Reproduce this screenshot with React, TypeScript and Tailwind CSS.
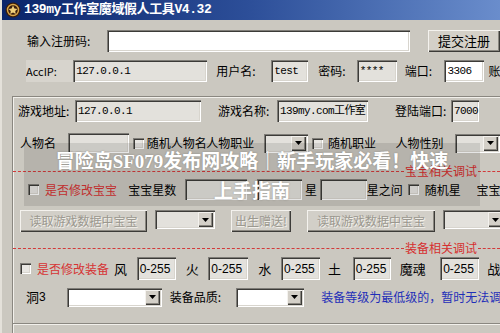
import React from "react";

const cjk = "font-['Noto_Sans_CJK_SC',sans-serif]";
const mono = "font-['Liberation_Mono','Noto_Sans_CJK_SC',monospace]";

const sunken =
  "shadow-[inset_1px_1px_0_#7f7d78,inset_2px_2px_0_#3c3b38,inset_-1px_-1px_0_#ffffff,inset_-2px_-2px_0_#d8d5ce]";
const raised =
  "shadow-[inset_1px_1px_0_#f4f2ee,inset_-1px_-1px_0_#3c3b38,inset_-2px_-2px_0_#8a8780]";

function Label({
  w,
  pl = 0,
  children,
  className = "",
}: {
  w?: number;
  pl?: number;
  children: React.ReactNode;
  className?: string;
}) {
  return (
    <div
      className={`h-full flex items-center whitespace-nowrap overflow-hidden text-[12px] text-black ${cjk} ${className}`}
      style={{ width: w, paddingLeft: pl }}
    >
      {children}
    </div>
  );
}

function Edit({
  w,
  value = "",
  white = false,
  className = "",
}: {
  w: number;
  value?: string;
  white?: boolean;
  className?: string;
}) {
  return (
    <div
      className={`h-full shrink-0 flex items-center pl-[3px] overflow-hidden whitespace-nowrap text-[11px] tracking-[-0.6px] text-black ${mono} ${sunken} ${
        white ? "bg-white" : "bg-[#e3e1dc]"
      } ${className}`}
      style={{ width: w }}
    >
      {value}
    </div>
  );
}

function Select({ w, white = false }: { w: number; white?: boolean }) {
  return (
    <div
      className={`h-[19px] shrink-0 flex justify-end items-stretch p-[2px] ${sunken} ${
        white ? "bg-white" : "bg-[#e3e1dc]"
      }`}
      style={{ width: w }}
    >
      <div className={`w-[15px] bg-[#d4d0c8] flex items-center justify-center ${raised}`}>
        <svg width="7" height="4" viewBox="0 0 7 4">
          <path d="M0 0h7L3.5 4z" fill="#000" />
        </svg>
      </div>
    </div>
  );
}

function Check({ ml = 0 }: { ml?: number }) {
  return (
    <div
      className={`w-[11px] h-[11px] shrink-0 bg-[#e8e6e2] ${sunken}`}
      style={{ marginLeft: ml }}
    />
  );
}

function Btn({ w, ml = 0, children }: { w: number; ml?: number; children: React.ReactNode }) {
  return (
    <div
      className={`h-full shrink-0 bg-[#d2cfc8] flex items-center justify-center text-[12px] text-[#9b988f] [text-shadow:1px_1px_0_#f3f1ec] ${cjk} ${raised}`}
      style={{ width: w, marginLeft: ml }}
    >
      {children}
    </div>
  );
}

function Legend({ text }: { text: string }) {
  return (
    <div className="h-[16px] flex items-center">
      <div className="flex-1 border-t border-dashed border-[#d23a3a]" />
      <span className={`text-[12px] leading-none text-[#d62f2f] px-[1px] ${cjk}`}>{text}</span>
      <div className="w-[22px] border-t border-dashed border-[#d23a3a]" />
    </div>
  );
}

const digits = "font-['Liberation_Sans',sans-serif] !text-[12px] !tracking-normal";

export default function App() {
  return (
    <div className="relative w-[500px] h-[333px] overflow-hidden bg-[#cbc8c0] border-l-2 border-[#e4e1da]">
      {/* title bar */}
      <div className="h-[20px] flex items-center bg-gradient-to-r from-[#0a246a] via-[#2d4f99] to-[#6a8dcc]">
        <div className="w-[22px] flex justify-center">
          <svg width="16" height="16" viewBox="0 0 16 16">
            <circle cx="8" cy="8" r="7.5" fill="#3a1d0c" />
            <circle cx="8" cy="8" r="5.5" fill="none" stroke="#d9a64a" strokeWidth="1.4" />
            <path d="M8 3.5l1.4 3 3 .4-2.2 2 .6 3L8 10.4 5.2 12l.6-3-2.2-2 3-.4z" fill="#f1cf7a" />
          </svg>
        </div>
        <span className={`text-[13px] font-bold text-white tracking-[-0.4px] ${mono}`}>
          139my工作室魔域假人工具V4.32
        </span>
      </div>

      {/* register row */}
      <div className="h-[22px] mt-[10px] flex">
        <Label w={105} pl={25}>输入注册码:</Label>
        <Edit w={303} white />
        <div
          className={`h-full w-[72px] ml-[18px] shrink-0 bg-[#d4d0c8] flex items-center justify-center text-[13px] text-black ${cjk} ${raised}`}
        >
          提交注册
        </div>
      </div>

      {/* account row */}
      <div className="h-[22px] mt-[8px] flex">
        <div className="w-[24px] shrink-0" />
        <Label w={49} className={`${mono} !text-[11px] bg-[#d7d4cd]`}>
          AccIP:
        </Label>
        <Edit w={134} value="127.0.0.1" />
        <Label w={66} pl={9}>用户名:</Label>
        <Edit w={37} value="test" />
        <Label w={50} pl={10}>密码:</Label>
        <Edit w={40} value="****" />
        <Label w={49} pl={8}>端口:</Label>
        <Edit w={40} value="3306" white />
        <Label pl={4}>账</Label>
      </div>

      {/* group box */}
      <div className="ml-[10px] mt-[14px] border-l border-t border-[#8a8780] shadow-[inset_1px_1px_0_#f2f0eb] h-[260px]">
        <div className="h-[22px] mt-[3px] flex">
          <Label w={62} pl={5}>游戏地址:</Label>
          <Edit w={126} value="127.0.0.1" />
          <Label w={76} pl={17}>游戏名称:</Label>
          <Edit w={91} value="139my.com工作室" />
          <Label w={83} pl={27}>登陆端口:</Label>
          <Edit w={28} value="7000" />
        </div>

        <div className="h-[20px] mt-[11px] flex items-center">
          <Label w={55} pl={7}>人物名</Label>
          <Edit w={61} />
          <Check ml={4} />
          <Label w={63} pl={3}>随机人物名</Label>
          <Label w={58}>人物职业</Label>
          <Select w={44} />
          <Check ml={4} />
          <Label w={73} pl={5}>随机职业</Label>
          <Label w={60}>人物性别</Label>
          <Select w={45} />
        </div>

        <div className="mt-[10px]">
          <Legend text="宝宝相关调试" />
        </div>

        <div className="h-[21px] flex items-center">
          <Check ml={15} />
          <Label w={86} pl={6} className="!text-[#d63434]">是否修改宝宝</Label>
          <Label w={63} pl={5}>宝宝星数</Label>
          <Edit w={62} />
          <Edit w={45} className="ml-[10px]" />
          <Label w={18} pl={3}>星</Label>
          <Edit w={47} />
          <Label w={42}>星之问</Label>
          <Check />
          <Label w={59} pl={6}>随机星</Label>
          <Label>宝宝</Label>
        </div>

        <div className="h-[22px] mt-[10px] flex items-start">
          <Btn w={127} ml={7}>读取游戏数据中宝宝</Btn>
          <div className="ml-[8px]">
            <Select w={60} />
          </div>
          <Btn w={60} ml={16}>出生赠送!</Btn>
          <Btn w={128} ml={16}>读取游戏数据中宝宝</Btn>
          <div className="ml-[8px]">
            <Select w={62} />
          </div>
        </div>

        <div className="mt-[8px]">
          <Legend text="装备相关调试" />
        </div>

        <div className="h-[23px] mt-[1px] flex items-center">
          <Check ml={7} />
          <Label w={81} pl={6} className="!text-[#d63434]">是否修改装备</Label>
          <Label w={26} pl={3} className="!text-[13px]">风</Label>
          <Edit w={39} value="0-255" className={digits} />
          <Label w={33} pl={10} className="!text-[13px]">火</Label>
          <Edit w={40} value="0-255" className={digits} />
          <Label w={33} pl={10} className="!text-[13px]">水</Label>
          <Edit w={39} value="0-255" className={digits} />
          <Label w={33} pl={8} className="!text-[13px]">土</Label>
          <Edit w={38} value="0-255" className={digits} />
          <Label w={50} pl={9} className="!text-[13px]">魔魂</Label>
          <Edit w={39} value="0-255" className={digits} />
          <Label pl={8} className="!text-[13px]">战</Label>
        </div>

        <div className="h-[20px] mt-[7px] flex items-center">
          <Label w={54} pl={13} className="!text-[13px]">
            洞<span className="font-['Liberation_Sans',sans-serif] text-[12px]">3</span>
          </Label>
          <Select w={95} white />
          <Label w={75} pl={8}>装备品质:</Label>
          <Select w={68} white />
          <Label pl={17} className="!text-[#1f2fb8]">装备等级为最低级的，暂时无法调</Label>
        </div>

        <div className="mt-[16px] border-t border-[#8a8780] shadow-[inset_0_1px_0_#f2f0eb] h-[10px]" />
      </div>

      {/* article title overlay */}
      <div className="absolute left-[22px] top-[143px] w-[456px] h-[63px] bg-black/10 flex flex-col items-center justify-center">
        <div
          className={`text-[19px] font-bold leading-[28px] text-white whitespace-nowrap [text-shadow:0_0_2px_rgba(0,0,0,0.25)] ${cjk}`}
        >
          冒险岛<span className="font-['Liberation_Serif',serif]">SF079</span>发布网攻略｜新手玩家必看！快速
        </div>
        <div
          className={`text-[19px] font-bold leading-[28px] text-white whitespace-nowrap [text-shadow:0_0_2px_rgba(0,0,0,0.25)] ${cjk}`}
        >
          上手指南
        </div>
      </div>
    </div>
  );
}
